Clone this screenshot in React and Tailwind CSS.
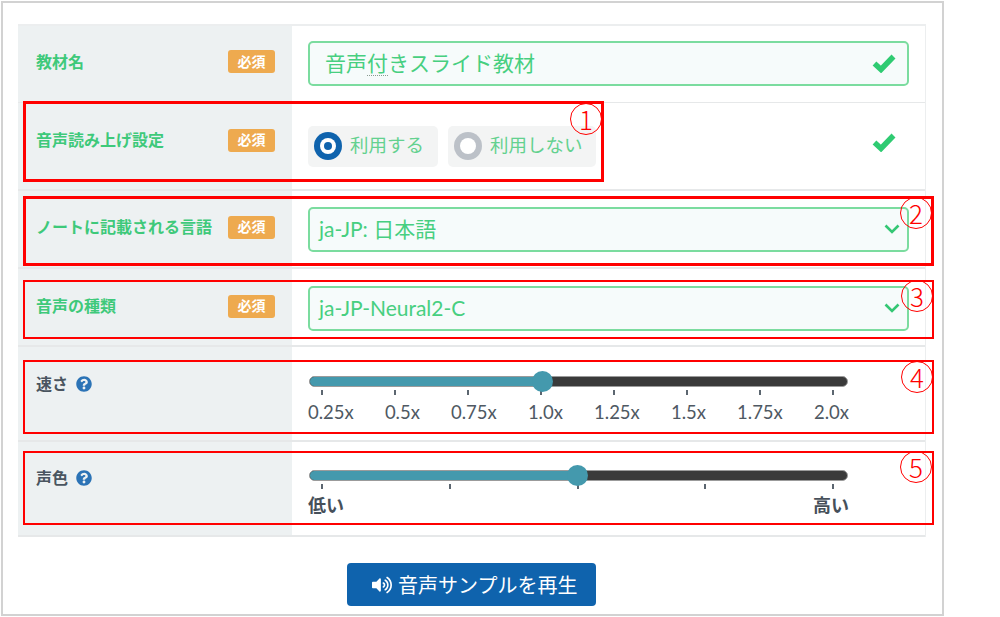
import React from "react";
import { FaQuestionCircle, FaVolumeUp } from "react-icons/fa";

const font = "font-['Lato','Noto_Sans_CJK_JP',sans-serif]";

function Badge() {
  return (
    <span className="flex items-center justify-center w-[47px] h-[23px] shrink-0 rounded-[3px] bg-[#eeaa4f] text-white text-[14px] font-bold leading-none">
      必須
    </span>
  );
}

function Label({ children, req, className = "" }) {
  return (
    <div className={"w-[274px] shrink-0 self-stretch bg-[#edf1f2] flex pl-[18px] pr-[17px] " + className}>
      <div className="flex-1 flex items-center justify-between text-[#3ec97a] text-[16px] font-bold leading-6 whitespace-nowrap">
        <span>{children}</span>
        {req && <Badge />}
      </div>
    </div>
  );
}

function Check({ className = "" }) {
  return (
    <svg width="24" height="20" viewBox="0 0 24 20" className={"shrink-0 " + className}>
      <path d="M2.5 10.5 L9 16.5 L21.5 3.5" fill="none" stroke="#2fcb72" strokeWidth="5.5" strokeLinejoin="miter" />
    </svg>
  );
}

function Chevron() {
  return (
    <svg width="16" height="10" viewBox="0 0 16 10" className="shrink-0">
      <path d="M1.5 1.5 L8 8 L14.5 1.5" fill="none" stroke="#34c774" strokeWidth="2.6" />
    </svg>
  );
}

function Field({ children, right, pl = "pl-[9px]", size = "text-[21px]" }) {
  return (
    <div className={"w-[601px] h-[45px] rounded-[5px] border-2 border-[#7bdc9f] bg-[#f6fbfb] flex items-center justify-between text-[#47cf80] whitespace-nowrap " + pl + " " + size}>
      <span>{children}</span>
      {right}
    </div>
  );
}

function Radio({ on, children, w }) {
  return (
    <div className={"h-[41px] rounded-[5px] bg-[#f3f4f4] flex items-center pl-[6px] gap-[8px] text-[#63d18f] text-[18.5px] " + w}>
      {on ? (
        <span className="w-[28px] h-[28px] rounded-full bg-[#0f63ad] flex items-center justify-center">
          <span className="w-[16px] h-[16px] rounded-full bg-white flex items-center justify-center">
            <span className="w-[8px] h-[8px] rounded-full bg-[#0f63ad]" />
          </span>
        </span>
      ) : (
        <span className="w-[28px] h-[28px] rounded-full bg-[#bcc1c8] flex items-center justify-center">
          <span className="w-[16px] h-[16px] rounded-full bg-white" />
        </span>
      )}
      <span>{children}</span>
    </div>
  );
}

function Help({ children, top }) {
  return (
    <div className={"w-[274px] shrink-0 self-stretch bg-[#edf1f2] pl-[18px] " + top}>
      <div className="flex items-center gap-[8px] text-[#4a5560] text-[16px] font-bold leading-6">
        <span>{children}</span>
        <FaQuestionCircle className="text-[#2b73b6] text-[16px]" />
      </div>
    </div>
  );
}

function Slider({ fill, ticks, labels, tickH }) {
  return (
    <div className="w-[541px] ml-[16px]">
      <div className="ml-px w-[539px] h-[11px] rounded-full bg-[#3a3a3a] border border-[#9b9b9b]">
        <div className={"relative h-full rounded-l-full bg-[#4499ad] " + fill}>
          <span className="absolute right-[-10px] top-[-6px] w-[21px] h-[21px] rounded-full bg-[#4499ad]" />
        </div>
      </div>
      <div className="flex justify-between pl-[13px] pr-[15px] mt-[3px]">
        {Array.from({ length: ticks }).map((_, i) => (
          <span key={i} className={"w-[2px] bg-[#5c6670] " + tickH} />
        ))}
      </div>
      {labels}
    </div>
  );
}

function Box({ className, num, numClass }) {
  return (
    <div className={"absolute border-[#ff0000] pointer-events-none " + className}>
      <span className={"absolute flex items-center justify-center w-[32px] h-[32px] rounded-full border border-[#ff0000] bg-transparent text-[#ff0000] text-[26px] leading-none font-['Noto_Sans_CJK_JP',sans-serif] font-light " + numClass}>
        {num}
      </span>
    </div>
  );
}

const speeds = ["0.25x", "0.5x", "0.75x", "1.0x", "1.25x", "1.5x", "1.75x", "2.0x"];

export default function App() {
  return (
    <div className={"relative w-[1000px] h-[617px] bg-white overflow-hidden pt-px pl-px " + font}>
      <div className="w-[943px] h-[615px] border-2 border-[#d2d2d2] pt-[21px] pl-[15px] bg-white">
        <div className="w-[908px] border-t-2 border-r border-[#eceeef]">
          <div className="flex items-center h-[77px] border-b border-[#e6e8e9]">
            <Label req className="pb-[5px]">教材名</Label>
            <div className="pl-[16px] pb-[2px]">
              <Field pl="pl-[15px]" right={<Check className="mr-[11px]" />}>
                音声
                <span className="border-b border-dotted border-[#8a9a90]">付</span>
                きスライド教材
              </Field>
            </div>
          </div>
          <div className="flex items-center h-[88px] border-b-2 border-[#e6e8e9]">
            <Label req className="pb-[12px]">音声読み上げ設定</Label>
            <div className="pl-[16px] flex items-center gap-[10px] w-[617px]">
              <Radio on w="w-[130px]">利用する</Radio>
              <Radio w="w-[148px]">利用しない</Radio>
              <Check className="ml-[266px] mb-[8px]" />
            </div>
          </div>
          <div className="flex items-center h-[78px] border-b-2 border-[#e6e8e9]">
            <Label req className="pb-[4px]">ノートに記載される言語</Label>
            <div className="pl-[16px]">
              <Field right={<span className="mr-[7px]"><Chevron /></span>}>ja-JP: 日本語</Field>
            </div>
          </div>
          <div className="flex items-center h-[78px] border-b-2 border-[#e6e8e9]">
            <Label req className="pb-[2px]">音声の種類</Label>
            <div className="pl-[16px] pt-[2px]">
              <Field right={<span className="mr-[7px]"><Chevron /></span>}>ja-JP-Neural2-C</Field>
            </div>
          </div>
          <div className="flex h-[95px] border-b-2 border-[#e6e8e9]">
            <Help top="pt-[25px]">速さ</Help>
            <div className="pt-[29px]">
              <Slider
                fill="w-[233px]"
                ticks={8}
                tickH="h-[5px]"
                labels={
                  <div className="flex justify-between mt-[2px] text-[#4f5963] text-[18.5px] leading-[30px]">
                    {speeds.map((s) => (
                      <span key={s}>{s}</span>
                    ))}
                  </div>
                }
              />
            </div>
          </div>
          <div className="flex h-[95px] border-b-2 border-[#e6e8e9]">
            <Help top="pt-[24px]">声色</Help>
            <div className="pt-[28px]">
              <Slider
                fill="w-[268px]"
                ticks={5}
                tickH="h-[5px]"
                labels={
                  <div className="flex justify-between mt-[1px] text-[#46505a] text-[18px] font-bold leading-[30px]">
                    <span>低い</span>
                    <span>高い</span>
                  </div>
                }
              />
            </div>
          </div>
        </div>
        <div className="mt-[26px] ml-[329px] w-[249px] h-[43px] rounded-[4px] bg-[#0f63ad] text-white flex items-center pl-[25px] gap-[6px] text-[20px]">
          <FaVolumeUp className="text-[20px]" />
          <span>音声サンプルを再生</span>
        </div>
      </div>

      <Box className="left-[23px] top-[101px] w-[581px] h-[81px] border-[3px]" num="1" numClass="right-[-1px] top-[-1px]" />
      <Box className="left-[23px] top-[196px] w-[911px] h-[70px] border-[3px]" num="2" numClass="right-[-1px] top-[-2px]" />
      <Box className="left-[23px] top-[280px] w-[911px] h-[59px] border-2" num="3" numClass="right-[-1px] top-[-2px]" />
      <Box className="left-[23px] top-[360px] w-[911px] h-[74px] border-2" num="4" numClass="right-[-1px] top-[-1px]" />
      <Box className="left-[23px] top-[451px] w-[911px] h-[74px] border-2" num="5" numClass="right-[0px] top-[-2px]" />
    </div>
  );
}
